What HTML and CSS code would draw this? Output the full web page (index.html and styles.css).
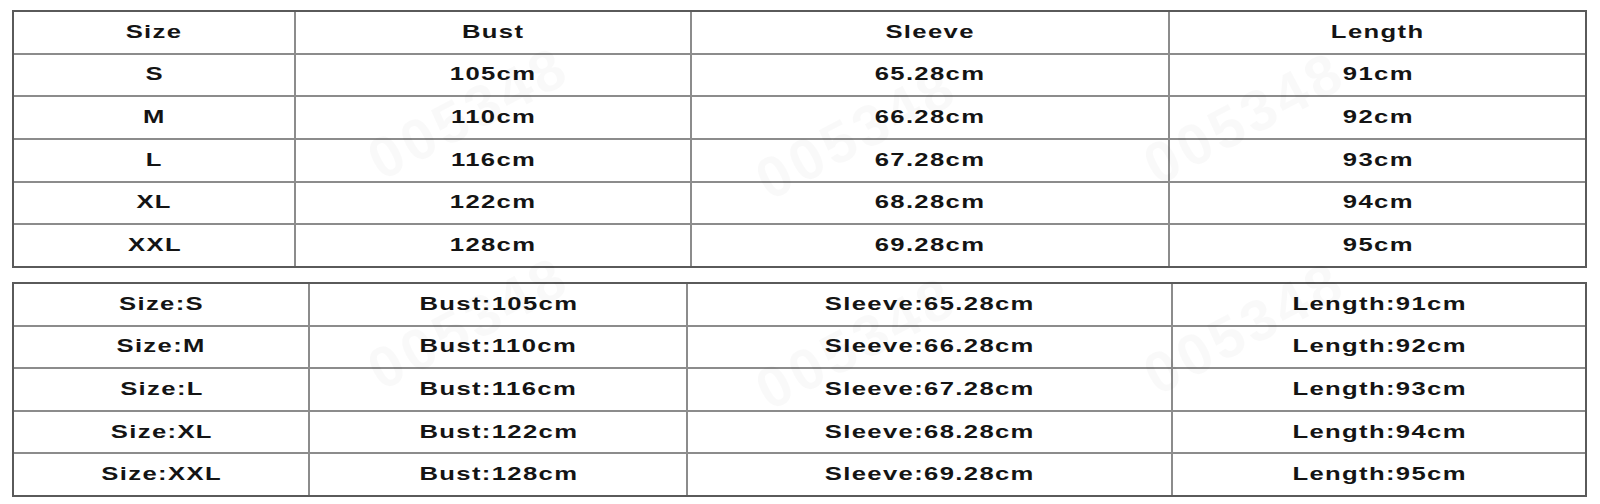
FILE: index.html
```html
<!DOCTYPE html>
<html>
<head>
<meta charset="utf-8">
<link rel="stylesheet" href="styles.css">
</head>
<body>
<div class="page">
  <div class="sheet sheet-a">
    <div class="cell"><span>Size</span></div>
    <div class="cell"><span>Bust</span></div>
    <div class="cell"><span>Sleeve</span></div>
    <div class="cell"><span>Length</span></div>

    <div class="cell"><span>S</span></div>
    <div class="cell"><span>105cm</span></div>
    <div class="cell"><span>65.28cm</span></div>
    <div class="cell"><span>91cm</span></div>

    <div class="cell"><span>M</span></div>
    <div class="cell"><span>110cm</span></div>
    <div class="cell"><span>66.28cm</span></div>
    <div class="cell"><span>92cm</span></div>

    <div class="cell"><span>L</span></div>
    <div class="cell"><span>116cm</span></div>
    <div class="cell"><span>67.28cm</span></div>
    <div class="cell"><span>93cm</span></div>

    <div class="cell"><span>XL</span></div>
    <div class="cell"><span>122cm</span></div>
    <div class="cell"><span>68.28cm</span></div>
    <div class="cell"><span>94cm</span></div>

    <div class="cell"><span>XXL</span></div>
    <div class="cell"><span>128cm</span></div>
    <div class="cell"><span>69.28cm</span></div>
    <div class="cell"><span>95cm</span></div>
  </div>

  <div class="sheet sheet-b">
    <div class="cell"><span>Size:S</span></div>
    <div class="cell"><span>Bust:105cm</span></div>
    <div class="cell"><span>Sleeve:65.28cm</span></div>
    <div class="cell"><span>Length:91cm</span></div>

    <div class="cell"><span>Size:M</span></div>
    <div class="cell"><span>Bust:110cm</span></div>
    <div class="cell"><span>Sleeve:66.28cm</span></div>
    <div class="cell"><span>Length:92cm</span></div>

    <div class="cell"><span>Size:L</span></div>
    <div class="cell"><span>Bust:116cm</span></div>
    <div class="cell"><span>Sleeve:67.28cm</span></div>
    <div class="cell"><span>Length:93cm</span></div>

    <div class="cell"><span>Size:XL</span></div>
    <div class="cell"><span>Bust:122cm</span></div>
    <div class="cell"><span>Sleeve:68.28cm</span></div>
    <div class="cell"><span>Length:94cm</span></div>

    <div class="cell"><span>Size:XXL</span></div>
    <div class="cell"><span>Bust:128cm</span></div>
    <div class="cell"><span>Sleeve:69.28cm</span></div>
    <div class="cell"><span>Length:95cm</span></div>
  </div>

  <div class="marks" aria-hidden="true">
    <span class="mark m2">005348</span>
    <span class="mark m3">005348</span>
    <span class="mark m4">005348</span>
    <span class="mark m7">005348</span>
    <span class="mark m8">005348</span>
    <span class="mark m9">005348</span>
  </div>
</div>
</body>
</html>
```
FILE: styles.css
```css
* { box-sizing: border-box; }

html, body {
  margin: 0;
  padding: 0;
  background: #ffffff;
}

.page {
  position: relative;
  width: 1600px;
  height: 504px;
  padding: 10px 0 0 12px;
  overflow: hidden;
  font-family: "Liberation Sans", Arial, sans-serif;
}

.sheet {
  display: grid;
  gap: 2px;
  background: #8c8c8c;
  border: 2px solid #5a5a5a;
  width: 1575px;
}

.sheet-a {
  grid-template-columns: 280px 394px 476px 415px;
  grid-template-rows: repeat(6, 1fr);
  height: 258px;
}

.sheet-b {
  margin-top: 14px;
  grid-template-columns: 294px 376px 483px 412px;
  grid-template-rows: repeat(5, 1fr);
  height: 215px;
}

.cell {
  background: #ffffff;
  display: flex;
  align-items: center;
  justify-content: center;
  padding-bottom: 2px;
}

.cell span {
  display: inline-block;
  font-size: 19px;
  font-weight: 700;
  color: #141414;
  letter-spacing: 1px;
  margin-right: -1px;
  line-height: 1;
  transform: scaleX(1.35);
  transform-origin: center center;
}

.marks {
  position: absolute;
  inset: 0;
  pointer-events: none;
}

.mark {
  position: absolute;
  font-size: 58px;
  font-weight: 700;
  letter-spacing: 4px;
  color: rgba(0, 0, 0, 0.022);
  transform: rotate(-28deg);
  transform-origin: left center;
  white-space: nowrap;
}

.m2 { left: 372px; top: 130px; }
.m3 { left: 760px; top: 150px; }
.m4 { left: 1148px; top: 135px; }
.m7 { left: 372px; top: 340px; }
.m8 { left: 760px; top: 360px; }
.m9 { left: 1148px; top: 345px; }
```
